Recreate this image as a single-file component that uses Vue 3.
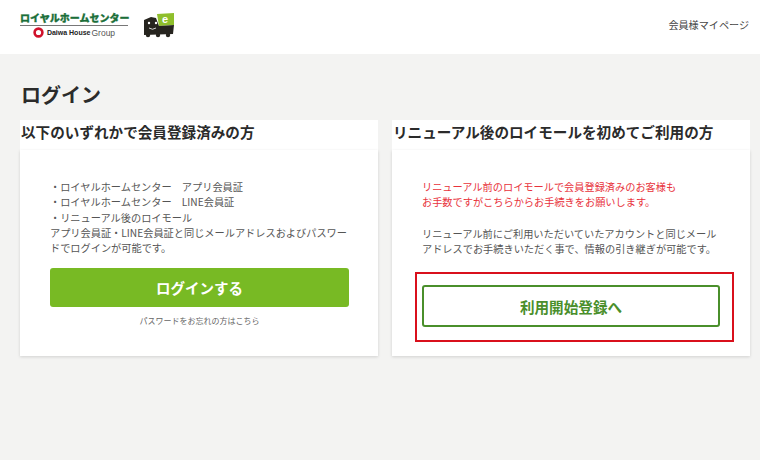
<template>
  <div class="page">
    <header class="site-header">
      <div class="logos">
        <div class="brand">
          <span class="brand-name">ロイヤルホームセンター</span>
          <div class="brand-sub">
            <svg class="ring" width="11" height="11" viewBox="0 0 11 11"><circle cx="5.5" cy="5.5" r="3.9" fill="none" stroke="#d0112b" stroke-width="2.6" /></svg>
            <b>Daiwa House</b><span class="group">Group</span>
          </div>
        </div>
        <svg class="mascot" width="34" height="26" viewBox="0 0 34 26">
          <path d="M15 2 L32 1 L32 13 L17 14 Z" fill="#8fbf2c" />
          <path d="M2 8 L9 5 L14 6 L17 14 L32 13 L31 22 L2 23 Z" fill="#26241f" />
          <circle cx="6" cy="23" r="2.2" fill="#26241f" />
          <circle cx="16" cy="23" r="2.2" fill="#26241f" />
          <circle cx="26" cy="23" r="2.2" fill="#26241f" />
          <circle cx="7" cy="11" r="1.2" fill="#fff" />
          <circle cx="14" cy="11" r="1.2" fill="#fff" />
          <path d="M7 16 Q10.5 18.5 14 16" fill="none" stroke="#fff" stroke-width="0.8" />
          <text x="20" y="11" class="mascot-e">e</text>
        </svg>
      </div>
      <a class="mypage">会員様マイページ</a>
    </header>

    <main class="content">
      <h1 class="title">ログイン</h1>
      <div class="cards">
        <section class="card">
          <h2 class="card-title">以下のいずれかで会員登録済みの方</h2>
          <div class="card-body">
            <p class="lead">
              ・ロイヤルホームセンター　アプリ会員証<br />
              ・ロイヤルホームセンター　LINE会員証<br />
              ・リニューアル後のロイモール<br />
              アプリ会員証・LINE会員証と同じメールアドレスおよびパスワードでログインが可能です。
            </p>
            <button class="btn-login">ログインする</button>
            <p class="forgot">パスワードをお忘れの方はこちら</p>
          </div>
        </section>

        <section class="card">
          <h2 class="card-title">リニューアル後のロイモールを初めてご利用の方</h2>
          <div class="card-body">
            <p class="notice">
              リニューアル前のロイモールで会員登録済みのお客様も<br />
              お手数ですがこちらからお手続きをお願いします。
            </p>
            <p class="lead2">リニューアル前にご利用いただいていたアカウントと同じメールアドレスでお手続きいただく事で、情報の引き継ぎが可能です。</p>
            <div class="highlight">
              <button class="btn-register">利用開始登録へ</button>
            </div>
          </div>
        </section>
      </div>
    </main>
  </div>
</template>

<script setup>
</script>

<style>
html,
body {
  margin: 0;
  background: #fff;
}
</style>

<style scoped>
.page {
  width: 760px;
  height: 460px;
  background: #f3f3f2;
  font-family: "Noto Sans CJK JP", "Noto Sans", sans-serif;
  color: #333;
  overflow: hidden;
}

/* ヘッダー */
.site-header {
  height: 54px;
  background: #fff;
  display: flex;
  align-items: center;
  justify-content: space-between;
  padding: 0 11px 0 20px;
  box-sizing: border-box;
}

.logos {
  display: flex;
  align-items: center;
  gap: 14px;
  margin-bottom: 5px;
}

.brand {
  width: 108px;
  display: flex;
  flex-direction: column;
  align-items: center;
}

.brand-name {
  width: 108px;
  font-size: 10px;
  line-height: 13px;
  font-weight: 900;
  color: #1b6f3a;
  -webkit-text-stroke: 0.3px #1b6f3a;
  white-space: nowrap;
  border-bottom: 1px solid #777;
  padding-bottom: 1px;
  text-align: center;
}

.brand-sub {
  display: flex;
  align-items: center;
  font-size: 7px;
  line-height: 12px;
  margin-top: 1px;
  color: #222;
  font-family: "Liberation Sans", sans-serif;
}

.ring {
  margin-right: 3px;
}

.group {
  margin-left: 1px;
  font-size: 8.5px;
  color: #555;
}

.mascot-e {
  font: 700 11px "Liberation Sans", sans-serif;
  fill: #fff;
}

.mypage {
  font-size: 10.1px;
  color: #444;
  margin-bottom: 5px;
}

/* 本文 */
.content {
  padding: 0 10px 0 20px;
}

.title {
  margin: 0;
  padding-top: 25px;
  padding-left: 1px;
  height: 41px;
  font-size: 20px;
  line-height: 31px;
  font-weight: 700;
  color: #2b2b2b;
}

.cards {
  display: flex;
  gap: 14px;
}

.card {
  width: 358px;
  height: 236px;
  background: #fff;
  display: flex;
  flex-direction: column;
}

.card-title {
  margin: 0;
  height: 30px;
  padding-left: 1px;
  font-size: 14.6px;
  line-height: 23px;
  font-weight: 700;
  color: #2b2b2b;
  white-space: nowrap;
}

.card-body {
  flex: 1;
  padding: 29px 29px 0 30px;
  font-size: 10.2px;
  line-height: 15.3px;
  color: #555;
  box-shadow: 0 1px 3px rgba(0, 0, 0, 0.14);
}

.lead {
  margin: 0 0 12.5px;
}

.btn-login {
  display: block;
  width: 100%;
  height: 39px;
  border: 0;
  border-radius: 3px;
  background: #78ba24;
  color: #fff;
  font: 700 14.5px "Noto Sans CJK JP", sans-serif;
}

.forgot {
  margin: 6px 0 0;
  text-align: center;
  font-size: 8px;
  color: #666;
}

.notice {
  margin: 0 0 16px;
  color: #e8333c;
}

.lead2 {
  margin: 0;
}

.highlight {
  margin: 16px -13px 0 -7px;
  border: 2px solid #d9101c;
  padding: 11px 12px 0 5px;
  height: 70px;
  box-sizing: border-box;
}

.btn-register {
  display: block;
  width: 100%;
  height: 42px;
  border: 2px solid #4a8f2b;
  border-radius: 3px;
  background: #fff;
  color: #4a8f2b;
  font: 700 14.6px "Noto Sans CJK JP", sans-serif;
}
</style>
